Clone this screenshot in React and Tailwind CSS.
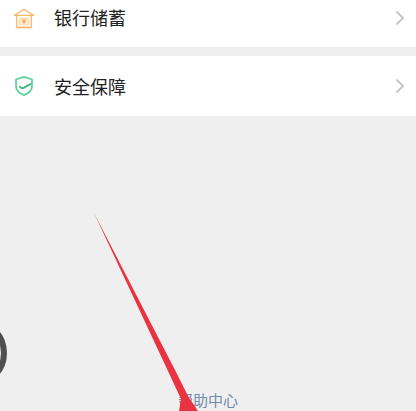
import React from "react";

const BankIcon = () => (
  <svg className="blur-[0.3px]" width="22" height="22" viewBox="0 0 22 22" fill="none" stroke="#f6b765" strokeWidth="1.3">
    <path d="M1.500 8.300 11 2.200l9.500 6.100z" strokeLinejoin="round" />
    <path d="M3.800 8.500v12h14.400v-12" />
    <path d="M2.800 20.400h16.400" />
    <path d="M6.500 11h9v6.800h-9z" fill="#fde9cc" stroke="#f9d29c" strokeWidth="0.8" />
    <path d="M9.300 11.800 11 13.800l1.700-2M11 13.800v3M9.300 14.600h3.400" stroke="#ec9a3a" strokeWidth="0.9" />
  </svg>
);

const ShieldIcon = () => (
  <svg className="blur-[0.3px]" width="20" height="22" viewBox="0 0 20 22" fill="none" stroke="#5ad29c" strokeWidth="1.800">
    <path d="M10 1.800 18 4.500V11c0 4.300-3.200 7.300-8 9.200C5.200 18.300 2 15.300 2 11V4.500Z" strokeLinejoin="round" />
    <path d="M6 11.800c1.100 1.300 2.300 1.700 3.600 1.100L16.500 9" strokeLinecap="round" stroke="#3fb583" />
  </svg>
);

const Chevron = () => (
  <svg className="blur-[0.3px]" width="10" height="16" viewBox="0 0 10 16" fill="none" stroke="#c6c6c6" strokeWidth="2">
    <path d="M1.500 1.500 8 8l-6.500 6.500" />
  </svg>
);

const Row = ({ icon, label, className }) => (
  <div className={`flex items-center justify-between bg-white pl-[13px] pr-[11px] ${className}`}>
    <div className="flex items-center">
      <div className="flex w-[22px] justify-center">{icon}</div>
      <span className="ml-[19px] text-[18px] text-[#222222]">{label}</span>
    </div>
    <Chevron />
  </div>
);

export default function App() {
  return (
    <div className="relative h-[411px] w-[416px] overflow-hidden bg-[#efefef] font-['Noto_Sans_CJK_SC','Noto_Sans',sans-serif]">
      <Row icon={<BankIcon />} label="银行储蓄" className="h-[47px] pb-[12px]" />
      <Row icon={<ShieldIcon />} label="安全保障" className="mt-[9px] h-[60px]" />

      <div className="mt-[275px] ml-[178px] text-[15px] leading-[18px] text-[#6f8bad]">帮助中心</div>

      {/* round button cut off at the left edge */}
      <div className="absolute left-[-63px] top-[318px] h-[70px] w-[70px] rounded-full border-[6px] border-[#4f4f4f] blur-[0.6px]" />

      {/* red annotation arrow */}
      <svg className="absolute left-0 top-0 blur-[0.4px]" width="416" height="411" viewBox="0 0 416 411" fill="none">
        <path d="M94 213 L167.500 370 L181 399 L179 411 L198 411 L188 396 L175 370 Z" fill="#ea3340" />
      </svg>
    </div>
  );
}
